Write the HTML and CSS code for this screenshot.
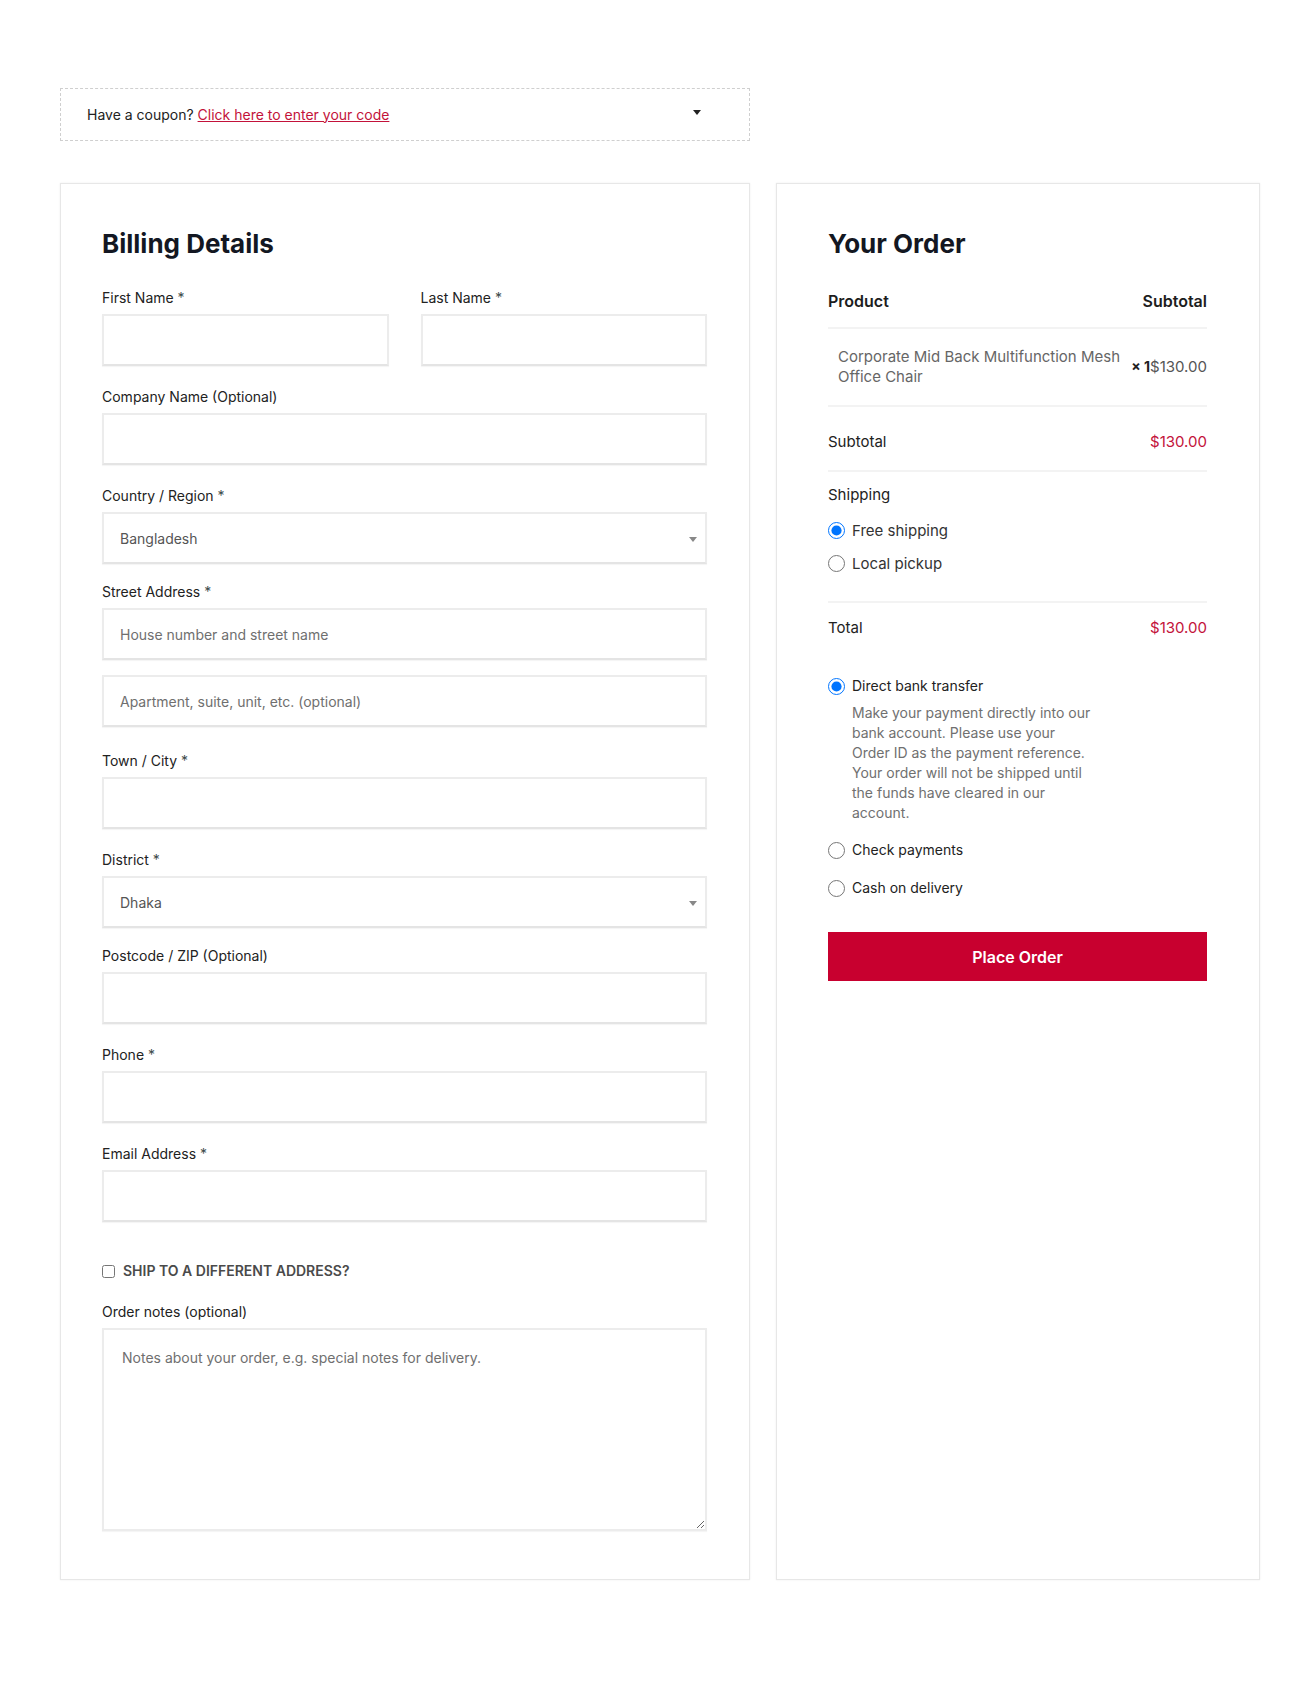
FILE: index.html
```html
<!DOCTYPE html>
<html lang="en">
<head>
<meta charset="utf-8">
<title>Checkout</title>
<link rel="stylesheet" href="styles.css">
</head>
<body>
<div class="page">
  <div class="coupon-row">
    <div class="coupon">
      <span>Have a coupon? <a href="#" class="coupon-link">Click here to enter your code</a></span>
      <span class="caret"></span>
    </div>
  </div>

  <div class="checkout">
    <section class="card billing">
      <h2 class="card-title">Billing Details</h2>

      <div class="row-2">
        <div class="field">
          <label class="label">First Name <span class="req">*</span></label>
          <input class="input" type="text">
        </div>
        <div class="field">
          <label class="label">Last Name <span class="req">*</span></label>
          <input class="input" type="text">
        </div>
      </div>

      <div class="field">
        <label class="label">Company Name (Optional)</label>
        <input class="input" type="text">
      </div>

      <div class="field field-select">
        <label class="label">Country / Region <span class="req">*</span></label>
        <div class="select-wrap">
          <select class="input select"><option>Bangladesh</option></select>
        </div>
      </div>

      <div class="field field-street">
        <label class="label">Street Address <span class="req">*</span></label>
        <input class="input" type="text" placeholder="House number and street name">
        <input class="input input-second" type="text" placeholder="Apartment, suite, unit, etc. (optional)">
      </div>

      <div class="field">
        <label class="label">Town / City <span class="req">*</span></label>
        <input class="input" type="text">
      </div>

      <div class="field field-select">
        <label class="label">District <span class="req">*</span></label>
        <div class="select-wrap">
          <select class="input select"><option>Dhaka</option></select>
        </div>
      </div>

      <div class="field">
        <label class="label">Postcode / ZIP (Optional)</label>
        <input class="input" type="text">
      </div>

      <div class="field">
        <label class="label">Phone <span class="req">*</span></label>
        <input class="input" type="text">
      </div>

      <div class="field">
        <label class="label">Email Address <span class="req">*</span></label>
        <input class="input" type="text">
      </div>

      <label class="ship-diff">
        <input type="checkbox" class="checkbox">
        <span>SHIP TO A DIFFERENT ADDRESS?</span>
      </label>

      <div class="field field-last">
        <label class="label">Order notes (optional)</label>
        <textarea class="textarea" placeholder="Notes about your order, e.g. special notes for delivery."></textarea>
      </div>
    </section>

    <section class="card order">
      <h2 class="card-title">Your Order</h2>

      <div class="order-table">
        <div class="o-row o-head">
          <span>Product</span>
          <span>Subtotal</span>
        </div>
        <div class="o-row o-item">
          <span class="item-name">Corporate Mid Back Multifunction Mesh Office Chair</span>
          <span class="item-price"><strong class="qty">× 1</strong>$130.00</span>
        </div>
        <div class="o-row o-sub">
          <span>Subtotal</span>
          <span class="price">$130.00</span>
        </div>
        <div class="o-shipping">
          <div class="ship-title">Shipping</div>
          <ul class="radio-list">
            <li><label class="radio-line"><input type="radio" name="ship" checked class="radio"><span>Free shipping</span></label></li>
            <li><label class="radio-line"><input type="radio" name="ship" class="radio"><span>Local pickup</span></label></li>
          </ul>
        </div>
        <div class="o-row o-total">
          <span>Total</span>
          <span class="price">$130.00</span>
        </div>
      </div>

      <ul class="payment-list">
        <li class="pay-item">
          <label class="radio-line pay-line"><input type="radio" name="pay" checked class="radio"><span>Direct bank transfer</span></label>
          <p class="pay-desc">Make your payment directly into our bank account. Please use your Order ID as the payment reference. Your order will not be shipped until the funds have cleared in our account.</p>
        </li>
        <li class="pay-item">
          <label class="radio-line pay-line"><input type="radio" name="pay" class="radio"><span>Check payments</span></label>
        </li>
        <li class="pay-item">
          <label class="radio-line pay-line"><input type="radio" name="pay" class="radio"><span>Cash on delivery</span></label>
        </li>
      </ul>

      <button class="place-order" type="button">Place Order</button>
    </section>
  </div>
</div>
</body>
</html>
```

FILE: styles.css
```css
* { box-sizing: border-box; }

html, body {
  margin: 0;
  padding: 0;
  background: #ffffff;
}

body {
  font-family: Inter, "Noto Sans", "Liberation Sans", sans-serif;
  color: #222;
  font-size: 14px;
  min-height: 1692px;
}

.page {
  width: 1204px;
  margin: 0 auto;
  padding: 88px 0 0 4px;
}

.coupon-row {
  width: 690px;
}

.coupon {
  display: flex;
  justify-content: space-between;
  align-items: center;
  height: 53px;
  padding: 0 48px 0 26px;
  border: 1px dashed #cfcfcf;
  font-size: 14px;
  line-height: 20px;
  color: #222;
}

.coupon-link {
  color: #c3123a;
  text-decoration: underline;
}

.caret {
  width: 0;
  height: 0;
  border-left: 4.5px solid transparent;
  border-right: 4.5px solid transparent;
  border-top: 5px solid #222;
  margin-top: -4px;
}

.checkout {
  display: grid;
  grid-template-columns: 690px 1fr;
  column-gap: 26px;
  margin-top: 42px;
}

.card {
  border: 1px solid #e7e7e7;
  box-shadow: 0 0 2px rgba(0, 0, 0, 0.07);
  background: #fff;
}

.billing {
  padding: 44px 42px 48px 41px;
}

.order {
  padding: 44px 52px 48px 51px;
}

.card-title {
  margin: 0;
  font-size: 26px;
  line-height: 31px;
  font-weight: 700;
  color: #131722;
}

.billing .card-title {
  margin-bottom: 29px;
}

.row-2 {
  display: grid;
  grid-template-columns: 1fr 1fr;
  column-gap: 32px;
}

.field {
  margin-bottom: 21px;
}

.field-select {
  margin-bottom: 18px;
}

.field-street {
  margin-bottom: 24px;
}

.field-last {
  margin-bottom: 0;
}

.label {
  display: block;
  font-size: 14px;
  line-height: 20px;
  margin-bottom: 6px;
  color: #222;
}

.req {
  color: #3c4a4a;
}

.input {
  display: block;
  width: 100%;
  height: 52px;
  padding: 0 16px;
  border: 2px solid #ececec;
  border-bottom-color: #e4e4e4;
  box-shadow: 0 1px 1px rgba(0, 0, 0, 0.04);
  background: #fff;
  font-family: inherit;
  font-size: 14px;
  color: #555;
  outline: none;
  border-radius: 0;
}

.input::placeholder {
  color: #6f6f6f;
}

.input-second {
  margin-top: 15px;
}

.select-wrap {
  position: relative;
}

.select {
  appearance: none;
  -webkit-appearance: none;
  color: #555;
}

.select-wrap::after {
  content: "";
  position: absolute;
  right: 10px;
  top: 50%;
  margin-top: -1px;
  width: 0;
  height: 0;
  border-left: 4px solid transparent;
  border-right: 4px solid transparent;
  border-top: 5px solid #888;
  pointer-events: none;
}

.ship-diff {
  display: flex;
  align-items: center;
  gap: 8px;
  margin-top: 39px;
  margin-bottom: 21px;
  font-size: 14px;
  line-height: 20px;
  font-weight: 600;
  color: #4a4a4a;
}

.checkbox {
  margin: 0;
  width: 13px;
  height: 13px;
}

.textarea {
  display: block;
  width: 100%;
  height: 203px;
  padding: 18px 18px;
  border: 2px solid #ececec;
  box-shadow: 0 1px 1px rgba(0, 0, 0, 0.04);
  font-family: inherit;
  font-size: 14px;
  line-height: 20px;
  color: #555;
  resize: vertical;
  outline: none;
}

.textarea::placeholder {
  color: #6f6f6f;
}

/* order table */
.order-table {
  margin-top: 16px;
}

.o-row {
  display: flex;
  justify-content: space-between;
  align-items: center;
  border-bottom: 2px solid #f3f3f3;
  font-size: 15px;
  line-height: 22px;
}

.o-head {
  padding: 15px 0;
  font-size: 16px;
  font-weight: 600;
  color: #1d1d1d;
}

.o-item {
  padding: 18px 0 18px;
  gap: 10px;
}

.item-name {
  flex: 1;
  padding-left: 10px;
  font-size: 15px;
  line-height: 20px;
  color: #666;
}

.item-price {
  color: #555;
  white-space: nowrap;
}

.qty {
  font-weight: 700;
  color: #222;
  font-size: 14px;
}

.o-sub {
  padding: 24px 0 17px;
  color: #222;
}

.price {
  color: #c3123a;
}

.o-shipping {
  padding: 12px 0 21px;
  border-bottom: 2px solid #f3f3f3;
}

.ship-title {
  font-size: 15px;
  line-height: 22px;
  color: #222;
}

.radio-list,
.payment-list {
  list-style: none;
  margin: 0;
  padding: 0;
}

.radio-list {
  margin-top: 8px;
}

.radio-list li {
  height: 33px;
  display: flex;
  align-items: center;
}

.radio-line {
  display: flex;
  align-items: center;
  gap: 7px;
  font-size: 15px;
  line-height: 22px;
  color: #333;
}

.radio {
  margin: 0;
  width: 17px;
  height: 17px;
  flex: none;
}

.o-total {
  padding: 14px 0 15px;
  border-bottom: none;
}

.payment-list {
  padding-top: 21px;
}

.pay-item {
  margin-bottom: 16px;
}

.pay-line {
  font-size: 14px;
  color: #222;
}

.pay-desc {
  margin: 6px 0 4px 24px;
  max-width: 241px;
  font-size: 14px;
  line-height: 20px;
  color: #707070;
}

.place-order {
  display: block;
  width: 100%;
  height: 49px;
  margin-top: 33px;
  border: none;
  background: #c8002f;
  color: #fff;
  font-family: inherit;
  font-size: 16px;
  font-weight: 600;
  cursor: pointer;
}
```
